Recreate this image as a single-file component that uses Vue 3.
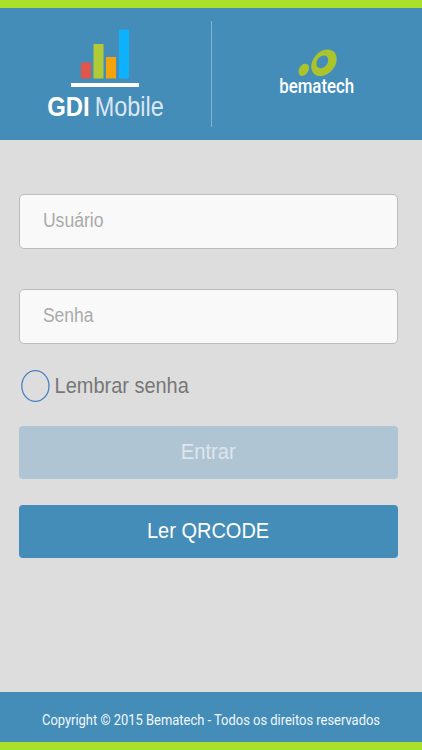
<script setup>
import { ref } from 'vue'

const bars = ref([
  { x: 81, y: 62.5, h: 16, color: '#e25549' },
  { x: 93.5, y: 44, h: 34.5, color: '#b0cb35' },
  { x: 106, y: 57, h: 21.5, color: '#f5a30a' },
  { x: 119, y: 29.5, h: 49, color: '#0db2ff' },
])
const fields = ref([
  { label: 'Usuário', width: 60.6 },
  { label: 'Senha', width: 50.6 },
])
</script>

<template>
  <div class="screen">
    <header class="header">
      <svg class="brand" width="211" height="132" viewBox="0 8 211 132">
        <rect v-for="b in bars" :key="b.x" :x="b.x" :y="b.y" width="10" :height="b.h" :fill="b.color" />
        <rect x="71" y="83" width="68" height="4" fill="#fff" />
        <text class="gdi" x="47.2" y="116.4" textLength="42.5" lengthAdjust="spacingAndGlyphs">GDI</text>
        <text class="mobile" x="94.7" y="116.4" textLength="69" lengthAdjust="spacingAndGlyphs">Mobile</text>
      </svg>
      <span class="divider"></span>
      <svg class="brand" width="210" height="132" viewBox="212 8 210 132">
        <ellipse cx="303.8" cy="69.8" rx="4.6" ry="6.6" transform="rotate(32 303.8 69.8)" fill="#abc42c" />
        <ellipse cx="324" cy="62.8" rx="11" ry="14.8" transform="rotate(40 324 62.8)" fill="#abc42c" />
        <ellipse cx="322.3" cy="61.8" rx="5.2" ry="7" transform="rotate(38 322.3 61.8)" fill="#448db8" />
        <text class="company" x="279.2" y="92.9" textLength="75" lengthAdjust="spacingAndGlyphs">bematech</text>
      </svg>
    </header>

    <main class="form">
      <div v-for="f in fields" :key="f.label" class="field">
        <svg width="377" height="53">
          <text x="22.9" y="32.4" :textLength="f.width" lengthAdjust="spacingAndGlyphs">{{ f.label }}</text>
        </svg>
      </div>
      <div class="remember">
        <svg width="379" height="34">
          <ellipse cx="16.4" cy="17" rx="13.6" ry="15.3" />
          <text x="35.6" y="24" textLength="134.2" lengthAdjust="spacingAndGlyphs">Lembrar senha</text>
        </svg>
      </div>
      <button class="button disabled" disabled>
        <svg width="379" height="53">
          <text x="161.8" y="33" textLength="54.8" lengthAdjust="spacingAndGlyphs">Entrar</text>
        </svg>
      </button>
      <button class="button">
        <svg width="379" height="53">
          <text x="128" y="33.3" textLength="122.2" lengthAdjust="spacingAndGlyphs">Ler QRCODE</text>
        </svg>
      </button>
    </main>

    <footer class="footer">
      <svg width="422" height="50">
        <text x="42" y="0" transform="translate(0 32.7) scale(1 1.16)" textLength="338" lengthAdjust="spacingAndGlyphs">Copyright © 2015 Bematech - Todos os direitos reservados</text>
      </svg>
    </footer>
  </div>
</template>

<style>
body {
  margin: 0;
  background: #ddd;
}
</style>

<style scoped>
.screen {
  box-sizing: border-box;
  width: 422px;
  height: 750px;
  display: flex;
  flex-direction: column;
  border-top: 8px solid #a9e02a;
  border-bottom: 8px solid #a9e02a;
  background: #ddd;
  font-family: "Liberation Sans", Arial, sans-serif;
}
svg {
  display: block;
  overflow: visible;
}
.header {
  display: flex;
  align-items: center;
  height: 132px;
  background: #448db8;
}
.brand {
  flex: none;
}
.divider {
  width: 1px;
  height: 106px;
  background: #82b3d3;
}
.gdi {
  font-size: 27.5px;
  font-weight: 700;
  fill: #fff;
}
.mobile {
  font-size: 27.5px;
  fill: #dce7f2;
}
.company {
  font-family: Roboto, sans-serif;
  font-size: 20px;
  font-weight: 500;
  fill: #fff;
}
.form {
  flex: 1;
  display: flex;
  flex-direction: column;
  padding: 53.5px 24px 0 19px;
}
.field {
  box-sizing: border-box;
  height: 55px;
  margin-bottom: 40px;
  border: 1px solid #bcbcbc;
  border-radius: 5px;
  background: #f9f9f9;
}
.field text {
  font-size: 20px;
  fill: #aaa;
}
.remember {
  margin-top: -14.5px;
  height: 34px;
}
.remember ellipse {
  fill: none;
  stroke: #4b7fc4;
  stroke-width: 1.3;
}
.remember text {
  font-size: 22px;
  fill: #777;
}
.button {
  flex: none;
  display: block;
  width: 379px;
  height: 53px;
  margin: 23px 0 0;
  padding: 0;
  border: 0;
  border-radius: 4px;
  background: #448db8;
  font-family: inherit;
}
.button text {
  font-size: 22.5px;
  fill: #fff;
}
.button.disabled {
  background: #b0c5d3;
}
.button.disabled text {
  fill: #dfe5ec;
}
.button + .button {
  margin-top: 26px;
}
.footer {
  height: 50px;
  background: #448db8;
}
.footer text {
  font-family: Roboto, sans-serif;
  font-size: 13.1px;
  fill: #f2f8fc;
}
</style>
